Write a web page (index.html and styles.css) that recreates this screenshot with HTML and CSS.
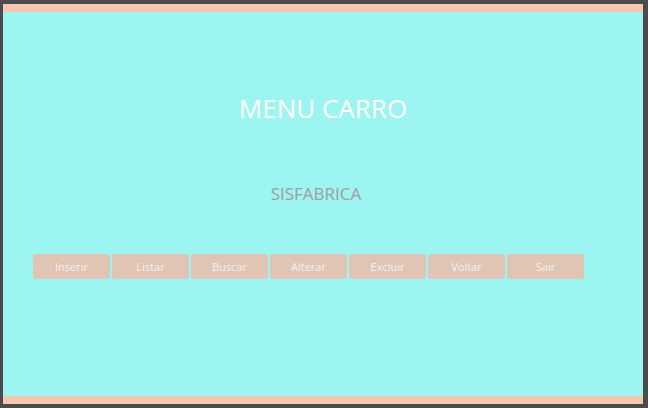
FILE: index.html
```html
<!DOCTYPE html>
<html lang="pt">
<head>
<meta charset="utf-8">
<title>Menu Carro</title>
<link rel="stylesheet" href="styles.css">
</head>
<body>
<div class="window">
  <h1 class="title">MENU CARRO</h1>
  <p class="subtitle">SISFABRICA</p>
  <nav class="buttons">
    <button class="btn">Inserir</button>
    <button class="btn">Listar</button>
    <button class="btn">Buscar</button>
    <button class="btn">Alterar</button>
    <button class="btn">Excluir</button>
    <button class="btn">Voltar</button>
    <button class="btn">Sair</button>
  </nav>
</div>
</body>
</html>
```

FILE: styles.css
```css
html, body {
  margin: 0;
  padding: 0;
  height: 100%;
  background: #4b4b4b;
}
body {
  padding: 4px 5px 4px 3px;
  box-sizing: border-box;
  font-family: "Open Sans", "Noto Sans", sans-serif;
}
.window {
  height: 100%;
  box-sizing: border-box;
  background: #9cf5f1;
  border-top: 8px solid #f6c7ae;
  border-bottom: 8px solid #f6c7ae;
  display: flex;
  flex-direction: column;
}
.title {
  margin: 78px 0 0;
  font-size: 26px;
  line-height: 36px;
  font-weight: 400;
  color: #ffffff;
  text-align: center;
}
.subtitle {
  margin: 56px 0 0;
  padding-right: 14px;
  font-size: 17px;
  line-height: 24px;
  color: #a39c9c;
  text-align: center;
}
.buttons {
  display: flex;
  gap: 2px;
  margin-top: 48px;
  padding-left: 30px;
}
.btn {
  width: 77px;
  height: 25px;
  border: none;
  border-radius: 3px;
  background: #e0c5b5;
  color: #f7f0f0;
  font-family: inherit;
  font-size: 11px;
  padding: 0;
}
```
